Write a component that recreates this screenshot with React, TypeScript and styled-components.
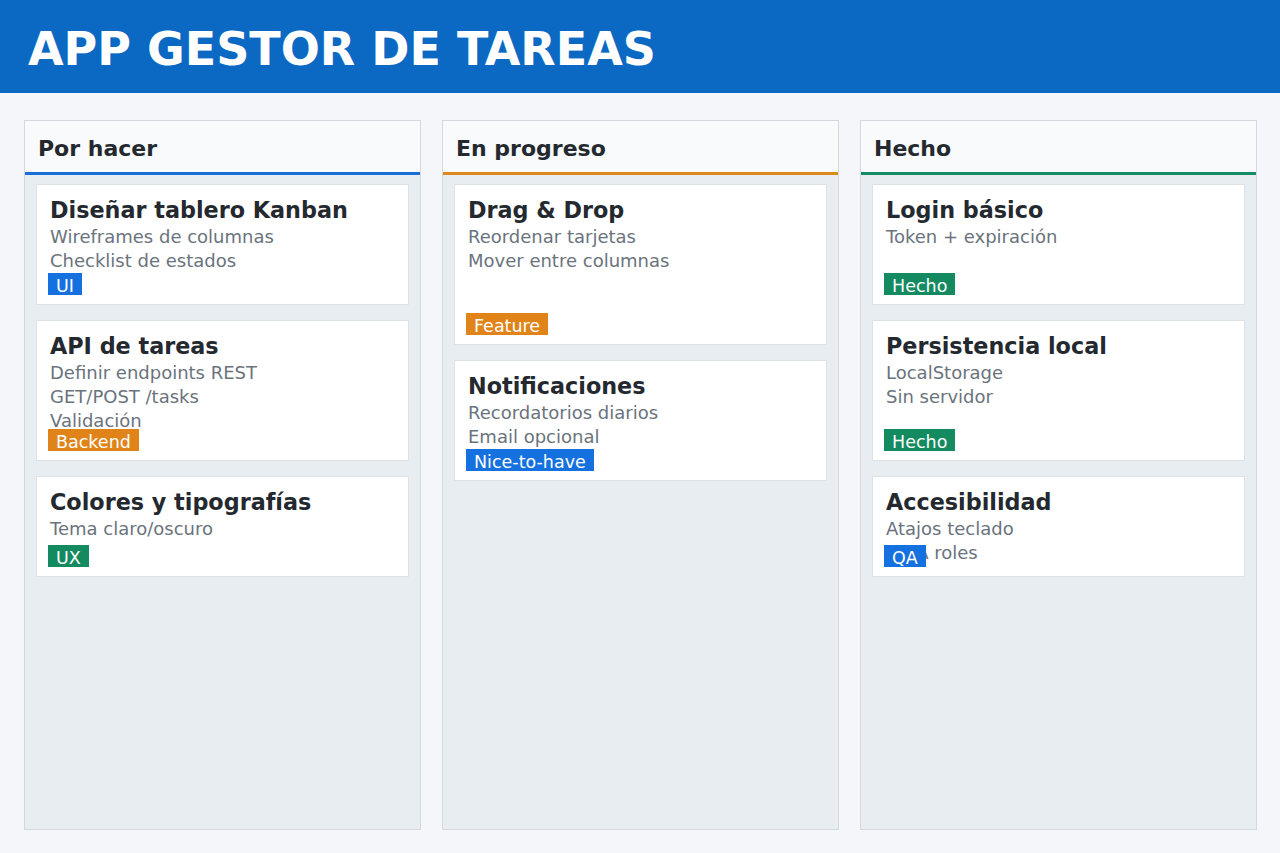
import React from "react";
import styled, { createGlobalStyle } from "styled-components";

const Global = createGlobalStyle`
  html, body { margin: 0; padding: 0; }
  body {
    background: #f4f6fa;
    font-family: "DejaVu Sans", "Liberation Sans", sans-serif;
    width: 1280px;
    height: 853px;
    overflow: hidden;
  }
`;

const Header = styled.header`
  height: 93px;
  background: #0b69c3;
  display: flex;
  align-items: center;
  padding: 4px 0 0 28px;
  box-sizing: border-box;
`;

const Title = styled.h1`
  margin: 0;
  color: #ffffff;
  font-size: 46px;
  font-weight: bold;
  line-height: 1;
`;

const Board = styled.main`
  display: grid;
  grid-template-columns: repeat(3, 397px);
  column-gap: 21px;
  padding: 27px 24px 0 24px;
`;

const Column = styled.section`
  height: 710px;
  box-sizing: border-box;
  background: #e8edf1;
  border: 1px solid #d3d9df;
  display: flex;
  flex-direction: column;
`;

const ColumnHead = styled.div<{ $accent: string }>`
  height: 54px;
  box-sizing: border-box;
  background: #f9fafb;
  border-bottom: 3px solid ${(p) => p.$accent};
  display: flex;
  align-items: center;
  padding: 3px 13px 0;
`;

const ColumnTitle = styled.h2`
  margin: 0;
  font-size: 22px;
  font-weight: bold;
  color: #24292f;
`;

const CardList = styled.div`
  display: flex;
  flex-direction: column;
  gap: 15px;
  padding: 9px 11px 0 11px;
`;

const Card = styled.article<{ $h: number }>`
  height: ${(p) => p.$h}px;
  box-sizing: border-box;
  background: #ffffff;
  border: 1px solid #dde2e7;
  display: grid;
  grid-template-areas: "stack";
  padding: 0 11px 9px 11px;
`;

const Body = styled.div`
  grid-area: stack;
  padding: 12px 0 0 2px;
`;

const CardTitle = styled.h3`
  margin: 0 0 2px 0;
  font-size: 22.3px;
  line-height: 26px;
  font-weight: bold;
  color: #24292f;
`;

const Line = styled.div`
  font-size: 18px;
  line-height: 24px;
  color: #6a737d;
  white-space: nowrap;
`;

const Tag = styled.span<{ $bg: string }>`
  grid-area: stack;
  align-self: end;
  justify-self: start;
  position: relative;
  height: 22px;
  box-sizing: border-box;
  background: ${(p) => p.$bg};
  color: #ffffff;
  font-size: 17.5px;
  line-height: 27px;
  padding: 0 8px;
  white-space: nowrap;
  overflow: hidden;
`;

const BLUE = "#1570e0";
const ORANGE = "#e0841a";
const GREEN = "#138a60";

type Task = { title: string; lines: string[]; tag: string; color: string; h: number };
type Col = { name: string; accent: string; tasks: Task[] };

const columns: Col[] = [
  {
    name: "Por hacer",
    accent: "#1a6fd6",
    tasks: [
      { title: "Diseñar tablero Kanban", lines: ["Wireframes de columnas", "Checklist de estados"], tag: "UI", color: BLUE, h: 121 },
      { title: "API de tareas", lines: ["Definir endpoints REST", "GET/POST /tasks", "Validación"], tag: "Backend", color: ORANGE, h: 141 },
      { title: "Colores y tipografías", lines: ["Tema claro/oscuro"], tag: "UX", color: GREEN, h: 101 },
    ],
  },
  {
    name: "En progreso",
    accent: "#dd8a1c",
    tasks: [
      { title: "Drag & Drop", lines: ["Reordenar tarjetas", "Mover entre columnas"], tag: "Feature", color: ORANGE, h: 161 },
      { title: "Notificaciones", lines: ["Recordatorios diarios", "Email opcional"], tag: "Nice-to-have", color: BLUE, h: 121 },
    ],
  },
  {
    name: "Hecho",
    accent: "#168a62",
    tasks: [
      { title: "Login básico", lines: ["Token + expiración"], tag: "Hecho", color: GREEN, h: 121 },
      { title: "Persistencia local", lines: ["LocalStorage", "Sin servidor"], tag: "Hecho", color: GREEN, h: 141 },
      { title: "Accesibilidad", lines: ["Atajos teclado", "ARIA roles"], tag: "QA", color: BLUE, h: 101 },
    ],
  },
];

export default function App() {
  return (
    <>
      <Global />
      <Header>
        <Title>APP GESTOR DE TAREAS</Title>
      </Header>
      <Board>
        {columns.map((c) => (
          <Column key={c.name}>
            <ColumnHead $accent={c.accent}>
              <ColumnTitle>{c.name}</ColumnTitle>
            </ColumnHead>
            <CardList>
              {c.tasks.map((t) => (
                <Card key={t.title} $h={t.h}>
                  <Body>
                    <CardTitle>{t.title}</CardTitle>
                    {t.lines.map((l) => (
                      <Line key={l}>{l}</Line>
                    ))}
                  </Body>
                  <Tag $bg={t.color}>{t.tag}</Tag>
                </Card>
              ))}
            </CardList>
          </Column>
        ))}
      </Board>
    </>
  );
}
